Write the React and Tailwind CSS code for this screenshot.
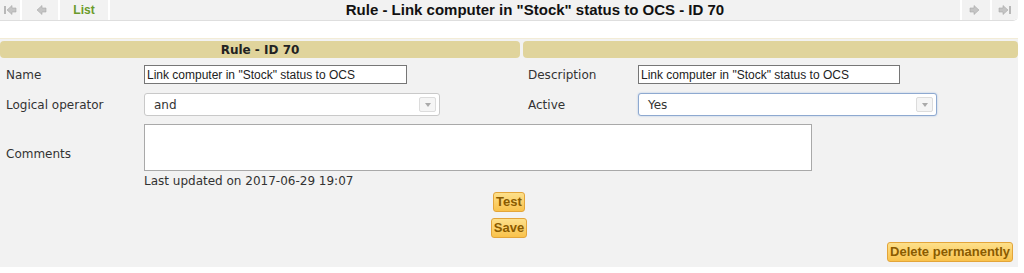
import { useState } from 'react'

const lbl = "font-['DejaVu_Sans',sans-serif] text-[12px] text-[#333]"
const txt = "font-['Liberation_Sans',Arial,sans-serif] text-[12px] text-[#222]"

function Arrow({ dir = 'left', bar = false }) {
  const flip = dir === 'right' ? 'scale(-1,1) translate(-14,0)' : undefined
  return (
    <svg width="14" height="12" viewBox="0 0 14 12">
      <g transform={flip}>
        {bar && <rect x="1" y="2" width="2" height="8" fill="#b8b8b8" />}
        <path d="M4 6 L9 1.5 L9 4 L13 4 L13 8 L9 8 L9 10.5 Z" fill="#c4c4c4" stroke="#aaa" strokeWidth="0.6" />
      </g>
    </svg>
  )
}

function Select({ value, focused }) {
  return (
    <div
      className={`flex h-[23px] items-center justify-between rounded-[3px] border bg-white pl-[9px] pr-[3px] ${
        focused ? 'border-[#8ea9d0] shadow-[0_0_2px_#a9c1e4]' : 'border-[#c9c9c9]'
      }`}
    >
      <span className={`${lbl} text-[#333]`}>{value}</span>
      <span className="flex h-[15px] w-[17px] items-center justify-center rounded-[2px] border border-[#dcdcdc] bg-[#f5f5f5]">
        <svg width="6" height="4" viewBox="0 0 6 4"><path d="M0 0 L6 0 L3 4 Z" fill="#aaa" /></svg>
      </span>
    </div>
  )
}

function Btn({ children }) {
  return (
    <button className="rounded-[3px] border border-[#e3a53a] bg-gradient-to-b from-[#fde08a] to-[#f9c24a] px-[2px] py-[1px] font-['Liberation_Sans',Arial,sans-serif] text-[13px] font-bold leading-[16px] text-[#8a5b00]">
      {children}
    </button>
  )
}

export default function App() {
  const [active] = useState('Yes')
  return (
    <div className="h-[273px] w-[1024px] bg-white">
      {/* top navigation */}
      <div className="mr-[6px] flex h-[21px] items-stretch gap-[2px] rounded-br-[5px] border-b border-[#dedede] bg-white">
        <div className="flex w-[20px] items-center justify-center bg-[#f2f2f2]"><Arrow bar /></div>
        <div className="flex w-[36px] items-center justify-center bg-[#f2f2f2]"><Arrow /></div>
        <div className="flex w-[48px] items-center justify-center bg-[#f2f2f2] font-['Liberation_Sans',Arial,sans-serif] text-[12px] font-bold text-[#6a9a2a]">List</div>
        <div className="flex flex-1 items-center justify-center bg-[#f2f2f2] font-['Liberation_Sans',Arial,sans-serif] text-[15px] font-bold text-[#111]">
          Rule - Link computer in "Stock" status to OCS - ID 70
        </div>
        <div className="flex w-[28px] items-center justify-center bg-[#f2f2f2]"><Arrow dir="right" /></div>
        <div className="flex w-[26px] items-center justify-center rounded-br-[5px] bg-[#f2f2f2]"><Arrow dir="right" bar /></div>
      </div>

      {/* form */}
      <div className="mt-[17px] mr-[6px] border-t border-[#f3ecd6] bg-[#f2f2f2] pb-[5px]">
        <div className="flex gap-[3px] pt-[2px]">
          <div className="flex h-[17px] w-[520px] items-center justify-center rounded-[4px] bg-[#e0d49c] font-['DejaVu_Sans',sans-serif] text-[12px] font-bold text-[#222]">
            Rule - ID 70
          </div>
          <div className="h-[17px] flex-1 rounded-[4px] bg-[#e0d49c]" />
        </div>

        <div className="mt-[7px] flex h-[19px] items-center">
          <span className={`${lbl} w-[144px] pl-[6px]`}>Name</span>
          <div className={`${txt} flex h-[19px] w-[263px] items-center border border-[#767676] bg-white px-[2px]`}>Link computer in "Stock" status to OCS</div>
          <span className={`${lbl} ml-[121px] w-[110px]`}>Description</span>
          <div className={`${txt} flex h-[19px] w-[262px] items-center border border-[#767676] bg-white px-[2px]`}>Link computer in "Stock" status to OCS</div>
        </div>

        <div className="mt-[9px] flex items-center">
          <span className={`${lbl} w-[144px] pl-[6px]`}>Logical operator</span>
          <div className="w-[296px]"><Select value="and" /></div>
          <span className={`${lbl} ml-[88px] w-[110px]`}>Active</span>
          <div className="w-[299px]"><Select value={active} focused /></div>
        </div>

        <div className="mt-[8px] flex items-end">
          <span className={`${lbl} w-[144px] pb-[8px] pl-[6px]`}>Comments</span>
          <div className="h-[47px] w-[668px] border border-[#a9a9a9] bg-white" />
        </div>
        <div className={`${lbl} ml-[144px] mt-[3px] leading-[14px]`}>Last updated on 2017-06-29 19:07</div>

        <div className="mt-[4px] flex flex-col items-center gap-[6px]">
          <Btn>Test</Btn>
          <Btn>Save</Btn>
        </div>
        <div className="mt-[4px] flex justify-end pr-[5px]">
          <Btn>Delete permanently</Btn>
        </div>
      </div>
    </div>
  )
}
